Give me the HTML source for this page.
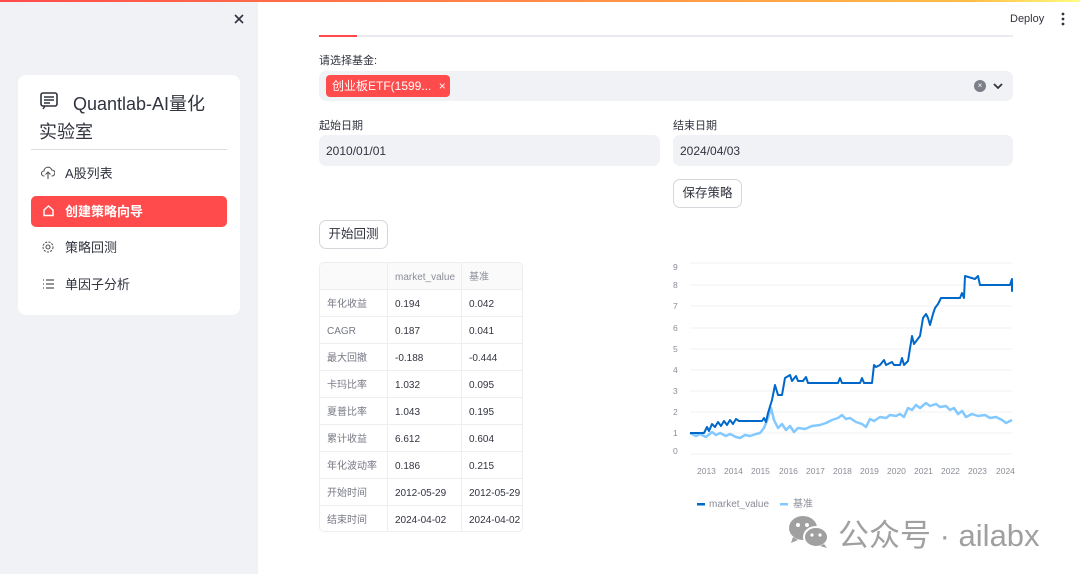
<!DOCTYPE html>
<html><head><meta charset="utf-8"><style>
*{box-sizing:border-box;margin:0;padding:0}
body{width:1080px;height:574px;overflow:hidden;background:#fff;font-family:"Liberation Sans","Noto Sans CJK SC",sans-serif;color:#31333f;position:relative}
.a{position:absolute}
.top{left:0;top:0;width:1080px;height:2px;background:linear-gradient(90deg,#ff4b4b,#ffbd45 90%,#fffd80)}
.side{left:0;top:2px;width:258px;height:572px;background:#f0f2f6}
.card{left:18px;top:75px;width:222px;height:240px;background:#fff;border-radius:8px}
.nav{left:31px;width:196px;height:31px;border-radius:5px;font-size:13px;line-height:31px;padding-left:34px}
.in{background:#f0f2f6;border-radius:7px;font-size:12px;color:#31333f}
.lbl{font-size:11px;color:#31333f}
.btn{border:1px solid #d5d7dd;border-radius:7px;background:#fff;font-size:12.5px;text-align:center}
.tb{left:319px;top:262px;width:204px;height:270px;border:1px solid #eceef2;border-radius:5px;overflow:hidden}
.row{position:absolute;left:0;width:204px;height:27px;border-top:1px solid #eceef2;font-size:10px;line-height:30px}
.row span{position:absolute;top:0;height:26px;padding-left:7px}
.c1{left:0;width:67px;color:#777985}
.c2{left:67px;width:74px;border-left:1px solid #eceef2}
.c3{left:141px;width:63px;border-left:1px solid #eceef2}
</style></head><body>
<div class="a top"></div>
<div class="a side"></div>
<svg class="a" style="left:234px;top:14px" width="10" height="10"><path d="M1 1L9 9M9 1L1 9" stroke="#31333f" stroke-width="1.6"/></svg>
<div class="a card"></div>
<svg class="a" style="left:39px;top:92px" width="20" height="18" viewBox="0 0 20 18"><rect x="2" y="1" width="16" height="13" rx="2" fill="none" stroke="#31333f" stroke-width="1.6"/><path d="M5 5h10M5 8h10M5 11h6M6 14l-2 3" stroke="#31333f" stroke-width="1.4" fill="none"/></svg>
<div class="a" style="left:73px;top:90px;font-size:18px;color:#31333f">Quantlab-AI量化</div>
<div class="a" style="left:39px;top:118px;font-size:18px;color:#31333f">实验室</div>
<div class="a" style="left:31px;top:149px;width:196px;height:1px;background:#dcdde2"></div>
<div class="a nav" style="top:158px">A股列表</div>
<svg class="a" style="left:41px;top:166px" width="14" height="14" viewBox="0 0 14 14"><path d="M3.5 10H3a2.5 2.5 0 0 1 0-5 4 4 0 0 1 7.8-1A3 3 0 0 1 11 10h-.5M7 13V6M4.5 8.5L7 6l2.5 2.5" fill="none" stroke="#555" stroke-width="1.1"/></svg>
<div class="a nav" style="top:196px;background:#ff4b4b;color:#fff;font-weight:bold">创建策略向导</div>
<svg class="a" style="left:42px;top:204px" width="13" height="13" viewBox="0 0 13 13"><path d="M2 6L6.5 2L11 6V11.5H2Z" fill="none" stroke="#fff" stroke-width="1.4"/></svg>
<div class="a nav" style="top:232px">策略回测</div>
<svg class="a" style="left:41px;top:240px" width="14" height="14" viewBox="0 0 14 14"><circle cx="7" cy="7" r="2" fill="none" stroke="#555" stroke-width="1.1"/><circle cx="7" cy="7" r="5" fill="none" stroke="#555" stroke-width="1.1" stroke-dasharray="2.2 1.2"/></svg>
<div class="a nav" style="top:269px">单因子分析</div>
<svg class="a" style="left:42px;top:278px" width="13" height="12" viewBox="0 0 13 12"><path d="M1 2h1M1 6h1M1 10h1M4 2h8M4 6h8M4 10h8" stroke="#555" stroke-width="1.2"/></svg>

<div class="a" style="left:1010px;top:13px;font-size:11px;color:#31333f">Deploy</div>
<svg class="a" style="left:1060px;top:12px" width="6" height="14"><circle cx="3" cy="2" r="1.4" fill="#31333f"/><circle cx="3" cy="7" r="1.4" fill="#31333f"/><circle cx="3" cy="12" r="1.4" fill="#31333f"/></svg>
<div class="a" style="left:319px;top:35px;width:694px;height:2px;background:#eaebee"></div>
<div class="a" style="left:319px;top:35px;width:38px;height:2px;background:#ff4b4b"></div>
<div class="a lbl" style="left:319px;top:52px">请选择基金:</div>
<div class="a in" style="left:319px;top:71px;width:694px;height:30px"></div>
<div class="a" style="left:326px;top:75px;width:124px;height:22px;background:#ff4b4b;border-radius:4px;color:#fff;font-size:12px;line-height:22px;padding-left:6px">创业板ETF(1599... <span style="margin-left:4px">×</span></div>
<div class="a" style="left:974px;top:80px;width:12px;height:12px;border-radius:50%;background:#7c7f88;color:#fff;font-size:8px;line-height:12px;text-align:center">×</div>
<svg class="a" style="left:993px;top:82px" width="10" height="8"><path d="M1 2l4 4 4-4" stroke="#31333f" stroke-width="1.8" fill="none"/></svg>
<div class="a lbl" style="left:319px;top:117px">起始日期</div>
<div class="a in" style="left:319px;top:135px;width:341px;height:31px;padding:9px 7px">2010/01/01</div>
<div class="a lbl" style="left:673px;top:117px">结束日期</div>
<div class="a in" style="left:673px;top:135px;width:340px;height:31px;padding:9px 7px">2024/04/03</div>
<div class="a btn" style="left:673px;top:179px;width:69px;height:29px;line-height:27px">保存策略</div>
<div class="a btn" style="left:319px;top:220px;width:69px;height:29px;line-height:27px">开始回测</div>

<div class="a tb">
<div class="row" style="top:-1px;background:#fafafb"><span class="c1"></span><span class="c2" style="color:#8a8d97">market_value</span><span class="c3" style="color:#8a8d97">基准</span></div>
<div class="row" style="top:26px"><span class="c1">年化收益</span><span class="c2">0.194</span><span class="c3">0.042</span></div>
<div class="row" style="top:53px"><span class="c1">CAGR</span><span class="c2">0.187</span><span class="c3">0.041</span></div>
<div class="row" style="top:80px"><span class="c1">最大回撤</span><span class="c2">-0.188</span><span class="c3">-0.444</span></div>
<div class="row" style="top:107px"><span class="c1">卡玛比率</span><span class="c2">1.032</span><span class="c3">0.095</span></div>
<div class="row" style="top:134px"><span class="c1">夏普比率</span><span class="c2">1.043</span><span class="c3">0.195</span></div>
<div class="row" style="top:161px"><span class="c1">累计收益</span><span class="c2">6.612</span><span class="c3">0.604</span></div>
<div class="row" style="top:188px"><span class="c1">年化波动率</span><span class="c2">0.186</span><span class="c3">0.215</span></div>
<div class="row" style="top:215px"><span class="c1">开始时间</span><span class="c2">2012-05-29</span><span class="c3">2012-05-29</span></div>
<div class="row" style="top:242px"><span class="c1">结束时间</span><span class="c2">2024-04-02</span><span class="c3">2024-04-02</span></div>
</div>

<svg class="a" style="left:660px;top:250px" width="420" height="280" viewBox="660 250 420 280">
<g stroke="#eef0f3" stroke-width="1">
<path d="M690 263H1012M690 285H1012M690 306H1012M690 328H1012M690 349H1012M690 370H1012M690 391H1012M690 412H1012M690 433H1012M690 454H1012"/></g>
<g font-size="8.5" fill="#8a8d97" font-family="Liberation Sans">
<text x="673" y="270">9</text><text x="673" y="288">8</text><text x="673" y="309">7</text><text x="673" y="331">6</text><text x="673" y="352">5</text><text x="673" y="373">4</text><text x="673" y="394">3</text><text x="673" y="415">2</text><text x="673" y="436">1</text><text x="673" y="454">0</text>
<text x="697" y="474">2013</text><text x="724" y="474">2014</text><text x="751" y="474">2015</text><text x="779" y="474">2016</text><text x="806" y="474">2017</text><text x="833" y="474">2018</text><text x="860" y="474">2019</text><text x="887" y="474">2020</text><text x="914" y="474">2021</text><text x="941" y="474">2022</text><text x="968" y="474">2023</text><text x="996" y="474">2024</text>
<text x="709" y="507" font-size="10">market_value</text><text x="793" y="507" font-size="10">基准</text></g>
<rect x="697" y="503" width="8" height="2.5" fill="#0068c9"/><rect x="780" y="503" width="8" height="2.5" fill="#83c9ff"/>
<path d="M690 433L696 436L700 434L706 437L712 432L716 435L720 433L726 436L730 434L736 437L740 438L745 435L750 436L756 434L760 433L764 428L768 418L771 408L774 420L778 428L782 424L786 430L790 426L794 432L798 428L805 429L812 426L820 425L826 423L832 420L838 418L842 415L846 419L850 418L856 422L862 424L866 427L870 419L874 421L880 417L886 418L890 415L896 416L900 414L904 417L908 408L912 410L916 405L920 408L926 403L930 406L936 404L940 407L946 406L950 410L954 408L958 414L962 411L966 417L972 414L978 416L985 415L990 418L996 417L1002 420L1006 423L1012 420" fill="none" stroke="#83c9ff" stroke-width="2.5" stroke-linejoin="round"/>
<path d="M690 433L704 433L707 427L709 431L712 424L715 427L718 422L721 426L724 421L727 425L730 420L733 424L736 419L739 421L762 421L764 418L766 422L768 413L772 400L775 385L778 395L782 395L785 378L790 375L792 381L796 376L798 381L803 381L806 377L808 383L838 383L840 378L842 383L860 383L862 378L864 383L872 383L874 365L876 367L880 365L884 360L886 365L892 362L894 365L900 365L902 358L904 365L908 361L912 336L914 344L920 336L923 318L926 314L928 318L930 325L933 314L935 308L938 304L941 298L960 298L962 293L964 298L965 276L975 279L978 276L980 285L1010 285L1012 279L1012 291L1012 285" fill="none" stroke="#0068c9" stroke-width="2" stroke-linejoin="round"/>
</svg>
<svg class="a" style="left:788px;top:515px" width="42" height="34" viewBox="0 0 42 34"><ellipse cx="15" cy="13" rx="14" ry="12" fill="#a0a0a0"/><path d="M5 22l-2 6 7-3z" fill="#a0a0a0"/><ellipse cx="28" cy="22" rx="12" ry="10" fill="#a0a0a0" stroke="#fff" stroke-width="2"/><path d="M36 29l3 4-7-2z" fill="#a0a0a0"/><circle cx="10" cy="10" r="2" fill="#fff"/><circle cx="19" cy="10" r="2" fill="#fff"/><circle cx="24" cy="20" r="1.6" fill="#fff"/><circle cx="32" cy="20" r="1.6" fill="#fff"/></svg>
<div class="a" style="left:838px;top:510px;font-size:31px;color:#a0a0a0">公众号 · ailabx</div>
</body></html>
